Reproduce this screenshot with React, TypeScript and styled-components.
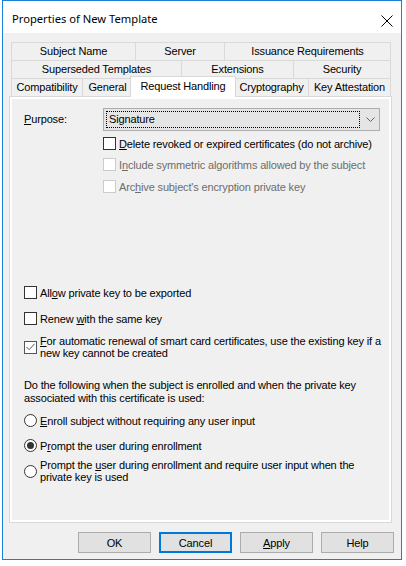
import React from 'react';
import styled, { createGlobalStyle } from 'styled-components';

const Global = createGlobalStyle`
  html, body { margin: 0; padding: 0; background: #ffffff; }
  body { font-family: "Liberation Sans", Arial, sans-serif; font-size: 11px; letter-spacing: -0.15px; color: #000; }
  * { box-sizing: border-box; }
`;

const Window = styled.div`
  margin-left: 2px;
  width: 400px;
  height: 560px;
  border: 1px solid #1a7fd6;
  background: #f0f0f0;
  display: flex;
  flex-direction: column;
`;

const TitleBar = styled.div`
  height: 32px;
  flex: none;
  background: #ffffff;
  display: flex;
  align-items: center;
  justify-content: space-between;
  padding: 3px 8px 0 9px;
  font-family: "Noto Sans", "Liberation Sans", sans-serif;
  font-size: 11.2px;
  letter-spacing: 0;
  color: #000;
`;

const CloseIcon = styled.svg`
  width: 12px;
  height: 12px;
  margin-top: 4px;
`;

const Content = styled.div`
  display: flex;
  flex-direction: column;
  padding: 9px 0 0 6px;
`;

const TabArea = styled.div`
  margin-right: 9px;
  display: flex;
  flex-direction: column;
`;

const TabRow = styled.div`
  display: flex;
  align-items: flex-start;
  height: 18px;
  width: 380px;
  margin-left: 2px;
`;

const Tab = styled.div<{ $w: number; $active?: boolean }>`
  flex: none;
  width: ${p => (p.$active ? p.$w + 3 : p.$w)}px;
  height: ${p => (p.$active ? 21 : 18)}px;
  margin-top: ${p => (p.$active ? -2 : 0)}px;
  margin-left: ${p => (p.$active ? -2 : 0)}px;
  margin-right: ${p => (p.$active ? -2 : -1)}px;
  border: 1px solid #d9d9d9;
  border-bottom: none;
  background: ${p => (p.$active ? '#ffffff' : '#f0f0f0')};
  position: relative;
  z-index: ${p => (p.$active ? 2 : 1)};
  display: flex;
  align-items: ${p => (p.$active ? 'flex-start' : 'center')};
  padding-top: ${p => (p.$active ? 3 : 0)}px;
  justify-content: center;
  white-space: nowrap;
  line-height: 13px;
`;

const Panel = styled.div`
  height: 427px;
  border: 1px solid #d9d9d9;
  box-shadow: inset 0 0 0 2px #ffffff;
  padding: 11px 0 0 14px;
  display: flex;
  flex-direction: column;
  position: relative;
`;

const PurposeRow = styled.div`
  display: grid;
  grid-template-columns: 79px 277px;
  align-items: center;
`;

const Label = styled.span`
  line-height: 13px;
`;

const Combo = styled.div`
  height: 23px;
  border: 1px solid #adadad;
  background: #e5e5e5;
  display: flex;
  align-items: center;
  padding: 0 0 0 2px;
`;

const FocusRect = styled.div`
  flex: none;
  width: 254px;
  height: 17px;
  border: 1px dotted #000;
  display: flex;
  align-items: center;
  padding-left: 2px;
  line-height: 13px;
`;

const Chevron = styled.svg`
  width: 9px;
  height: 5px;
  margin-left: 6px;
`;

const Indented = styled.div`
  margin-left: 79px;
  display: flex;
  flex-direction: column;
`;

const Section = styled.div`
  display: flex;
  flex-direction: column;
`;

const OptionRow = styled.div<{ $mt: number; $disabled?: boolean }>`
  display: flex;
  align-items: center;
  margin-top: ${p => p.$mt}px;
  color: ${p => (p.$disabled ? '#6d6d6d' : '#000')};
  line-height: 12px;
  white-space: nowrap;
`;

const Box = styled.span<{ $disabled?: boolean; $checked?: boolean }>`
  flex: none;
  width: 13px;
  height: 13px;
  border: 1px solid ${p => (p.$disabled ? '#cccccc' : p.$checked ? '#555555' : '#333333')};
  background: #ffffff;
  margin-right: 3px;
  display: flex;
  align-items: center;
  justify-content: center;
`;

const Radio = styled.span<{ $checked?: boolean }>`
  flex: none;
  width: 13px;
  height: 13px;
  border: 1px solid #333333;
  border-radius: 50%;
  background: #ffffff;
  margin-right: 3px;
  display: flex;
  align-items: center;
  justify-content: center;
  &::after {
    content: '';
    display: ${p => (p.$checked ? 'block' : 'none')};
    width: 7px;
    height: 7px;
    border-radius: 50%;
    background: #333333;
  }
`;

const Paragraph = styled.p<{ $mt: number }>`
  margin: ${p => p.$mt}px 0 0 0;
  line-height: 13px;
  white-space: nowrap;
`;

const ButtonRow = styled.div`
  display: flex;
  justify-content: flex-end;
  gap: 8px;
  margin: 9px 7px 0 0;
`;

const Button = styled.button<{ $default?: boolean }>`
  width: 73px;
  height: 21px;
  padding: 0;
  background: #e1e1e1;
  border: ${p => (p.$default ? '2px solid #0078d7' : '1px solid #adadad')};
  font-family: "Liberation Sans", Arial, sans-serif;
  font-size: 11px;
  letter-spacing: -0.15px;
  color: #000;
`;

const tabRows: { label: React.ReactNode; w: number; active?: boolean }[][] = [
  [
    { label: 'Subject Name', w: 125 },
    { label: 'Server', w: 90 },
    { label: 'Issuance Requirements', w: 167 },
  ],
  [
    { label: 'Superseded Templates', w: 171 },
    { label: 'Extensions', w: 113 },
    { label: 'Security', w: 98 },
  ],
  [
    { label: 'Compatibility', w: 72 },
    { label: 'General', w: 51 },
    { label: 'Request Handling', w: 103, active: true },
    { label: 'Cryptography', w: 75 },
    { label: 'Key Attestation', w: 83 },
  ],
];

const Check = () => (
  <svg width="9" height="8" viewBox="0 0 9 8">
    <path d="M0.5 4 L3.2 6.7 L8.5 0.8" fill="none" stroke="#555" strokeWidth="1" />
  </svg>
);

export default function App() {
  return (
    <>
      <Global />
      <Window>
        <TitleBar>
          <span>Properties of New Template</span>
          <CloseIcon viewBox="0 0 12 12">
            <path d="M0.5 0.5 L11.5 11.5 M11.5 0.5 L0.5 11.5" stroke="#000" strokeWidth="1" />
          </CloseIcon>
        </TitleBar>
        <Content>
          <TabArea>
            {tabRows.map((row, i) => (
              <TabRow key={i}>
                {row.map((t, j) => (
                  <Tab key={j} $w={t.w} $active={t.active}>
                    {t.label}
                  </Tab>
                ))}
              </TabRow>
            ))}
            <Panel>
              <PurposeRow>
                <Label><u>P</u>urpose:</Label>
                <Combo>
                  <FocusRect>Signature</FocusRect>
                  <Chevron viewBox="0 0 9 5">
                    <path d="M0.5 0.5 L4.5 4.5 L8.5 0.5" fill="none" stroke="#606060" strokeWidth="1" />
                  </Chevron>
                </Combo>
              </PurposeRow>
              <Indented>
                <OptionRow $mt={6}>
                  <Box />
                  <span><u>D</u>elete revoked or expired certificates (do not archive)</span>
                </OptionRow>
                <OptionRow $mt={8} $disabled>
                  <Box $disabled />
                  <span>I<u>n</u>clude symmetric algorithms allowed by the subject</span>
                </OptionRow>
                <OptionRow $mt={9} $disabled>
                  <Box $disabled />
                  <span>Arc<u>h</u>ive subject's encryption private key</span>
                </OptionRow>
              </Indented>
              <Section>
                <OptionRow $mt={93}>
                  <Box />
                  <span>All<u>o</u>w private key to be exported</span>
                </OptionRow>
                <OptionRow $mt={13}>
                  <Box />
                  <span>Renew <u>w</u>ith the same key</span>
                </OptionRow>
                <OptionRow $mt={10}>
                  <Box $checked><Check /></Box>
                  <span><u>F</u>or automatic renewal of smart card certificates, use the existing key if a<br />new key cannot be created</span>
                </OptionRow>
                <Paragraph $mt={20}>
                  Do the following when the subject is enrolled and when the private key<br />associated with this certificate is used:
                </Paragraph>
                <OptionRow $mt={9}>
                  <Radio />
                  <span><u>E</u>nroll subject without requiring any user input</span>
                </OptionRow>
                <OptionRow $mt={12}>
                  <Radio $checked />
                  <span>P<u>r</u>ompt the user during enrollment</span>
                </OptionRow>
                <OptionRow $mt={7}>
                  <Radio />
                  <span>Prompt the <u>u</u>ser during enrollment and require user input when the<br />private key is used</span>
                </OptionRow>
              </Section>
            </Panel>
          </TabArea>
          <ButtonRow>
            <Button>OK</Button>
            <Button $default>Cancel</Button>
            <Button><u>A</u>pply</Button>
            <Button>Help</Button>
          </ButtonRow>
        </Content>
      </Window>
    </>
  );
}
